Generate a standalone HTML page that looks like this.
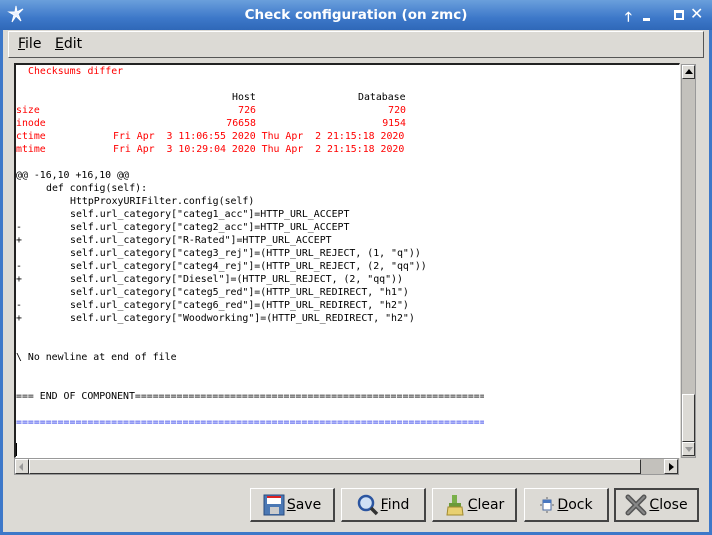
<!DOCTYPE html>
<html><head><meta charset="utf-8"><style>
*{margin:0;padding:0;box-sizing:border-box}
body{width:712px;height:535px;overflow:hidden;background:#dcdad5;font-family:"DejaVu Sans","Liberation Sans",sans-serif;position:relative}
.a{position:absolute}
#title{left:0;top:0;width:712px;height:30px;background:linear-gradient(#6a9fdc,#3d78c9 60%,#2f68b8);color:#fff;font-weight:bold;font-size:13.5px;text-align:center;line-height:31px}
#fl{left:0;top:30px;width:3px;height:505px;background:#3d78c9}
#fr{right:0;top:30px;width:3px;height:505px;background:#3d78c9}
#fb{left:0;top:532px;width:712px;height:3px;background:#3d78c9}
#menu{left:8px;top:31px;width:696px;height:27px;border:1px solid #fff;border-right-color:#555;border-bottom-color:#555;background:#dcdad5;font-size:14px;line-height:25px}
#text{left:14px;top:63px;width:666px;height:395px;background:#fff;border:1px solid #777;border-right-color:#fff;border-bottom-color:#fff;border-top:2px solid #222;border-left:2px solid #222}
.t{position:absolute;font-family:"DejaVu Sans Mono","Liberation Mono",monospace;font-size:9.9px;line-height:13px;white-space:pre;color:#000}
.r{color:#f00}
.b{color:#1c2ce8}
.btn{position:absolute;top:488px;height:34px;border:1px solid #fff;border-right:2px solid #444;border-bottom:2px solid #444;background:#dcdad5;font-size:14px;line-height:30px;display:flex;align-items:center;justify-content:center;gap:2px}
u{text-decoration:underline}
</style></head><body>
<div class="a" id="title">Check configuration (on zmc)</div>
<svg class="a" style="left:6px;top:4px" width="20" height="20" viewBox="0 0 20 20"><path d="M10 2 L11 8 L17 5 L12 10 L15 17 L10 12 L6 18 L8 11 L3 8 L9 8Z" fill="#e8f0ff" stroke="#fff" stroke-width="1"/></svg>
<div class="a" style="left:625px;top:8px;color:#fff;font-size:13px;font-weight:bold">🡑</div>
<div class="a" style="left:641px;top:10px;width:14px;height:12px;color:#fff;font-size:12px"><div style="position:absolute;left:2px;top:8px;width:7px;height:3px;background:#fff"></div></div>
<div class="a" style="left:674px;top:10px;width:10px;height:10px;border:2px solid #fff;border-top-width:3px"></div>
<div class="a" style="left:690px;top:4px;color:#fff;font-size:16px;font-weight:bold">✕</div>
<div class="a" id="fl"></div><div class="a" id="fr"></div><div class="a" id="fb"></div>
<div class="a" id="menu"><span style="position:absolute;left:9px"><u>F</u>ile</span><span style="position:absolute;left:46px"><u>E</u>dit</span></div>
<div class="a" id="text"></div>
<div class="t r" style="left:28px;top:65px">Checksums differ</div>
<div class="t" style="left:232px;top:91px">Host</div>
<div class="t" style="left:358px;top:91px">Database</div>
<div class="t r" style="left:226px;top:104px;width:30px;text-align:right">726</div><div class="t r" style="left:16px;top:104px">size</div><div class="t r" style="left:370px;top:104px;width:36px;text-align:right">720</div>
<div class="t r" style="left:16px;top:117px">inode</div><div class="t r" style="left:200px;top:117px;width:56px;text-align:right">76658</div><div class="t r" style="left:360px;top:117px;width:46px;text-align:right">9154</div>
<div class="t r" style="left:16px;top:130px">ctime</div><div class="t r" style="left:113px;top:130px">Fri Apr  3 11:06:55 2020 Thu Apr  2 21:15:18 2020</div>
<div class="t r" style="left:16px;top:143px">mtime</div><div class="t r" style="left:113px;top:143px">Fri Apr  3 10:29:04 2020 Thu Apr  2 21:15:18 2020</div>
<div class="t" style="left:16px;top:169px">@@ -16,10 +16,10 @@</div>
<div class="t" style="left:46px;top:182px">def config(self):</div>
<div class="t" style="left:70px;top:195px">HttpProxyURIFilter.config(self)</div>
<div class="t" style="left:70px;top:208px">self.url_category["categ1_acc"]=HTTP_URL_ACCEPT</div>
<div class="t" style="left:16px;top:221px">-</div><div class="t" style="left:70px;top:221px">self.url_category["categ2_acc"]=HTTP_URL_ACCEPT</div>
<div class="t" style="left:16px;top:234px">+</div><div class="t" style="left:70px;top:234px">self.url_category["R-Rated"]=HTTP_URL_ACCEPT</div>
<div class="t" style="left:70px;top:247px">self.url_category["categ3_rej"]=(HTTP_URL_REJECT, (1, "q"))</div>
<div class="t" style="left:16px;top:260px">-</div><div class="t" style="left:70px;top:260px">self.url_category["categ4_rej"]=(HTTP_URL_REJECT, (2, "qq"))</div>
<div class="t" style="left:16px;top:273px">+</div><div class="t" style="left:70px;top:273px">self.url_category["Diesel"]=(HTTP_URL_REJECT, (2, "qq"))</div>
<div class="t" style="left:70px;top:286px">self.url_category["categ5_red"]=(HTTP_URL_REDIRECT, "h1")</div>
<div class="t" style="left:16px;top:299px">-</div><div class="t" style="left:70px;top:299px">self.url_category["categ6_red"]=(HTTP_URL_REDIRECT, "h2")</div>
<div class="t" style="left:16px;top:312px">+</div><div class="t" style="left:70px;top:312px">self.url_category["Woodworking"]=(HTTP_URL_REDIRECT, "h2")</div>
<div class="t" style="left:16px;top:351px">\ No newline at end of file</div>
<div class="t" style="left:16px;top:390px;width:468px;overflow:hidden">=== END OF COMPONENT==========================================================================</div>
<div class="t b" style="left:16px;top:416px;width:468px;overflow:hidden">==============================================================================================================</div>
<div class="a" style="left:16px;top:443px;width:1px;height:13px;background:#000"></div>
<div class="a" style="left:681px;top:64px;width:15px;height:394px;background:#c3c1bc;border:1px solid #999"></div>
<div class="a" style="left:682px;top:65px;width:13px;height:14px;background:#dcdad5;border:1px solid #fff;border-right-color:#333;border-bottom-color:#333"></div>
<div class="a" style="left:685px;top:69px;width:0;height:0;border-left:4px solid transparent;border-right:4px solid transparent;border-bottom:5px solid #000"></div>
<div class="a" style="left:682px;top:394px;width:13px;height:48px;background:#dcdad5;border:1px solid #fff;border-right-color:#333;border-bottom-color:#333"></div>
<div class="a" style="left:682px;top:442px;width:13px;height:14px;background:#dcdad5;border:1px solid #fff;border-right-color:#333;border-bottom-color:#333"></div>
<div class="a" style="left:685px;top:447px;width:0;height:0;border-left:4px solid transparent;border-right:4px solid transparent;border-top:5px solid #999"></div>
<div class="a" style="left:14px;top:458px;width:665px;height:17px;background:#c3c1bc;border:1px solid #999"></div>
<div class="a" style="left:15px;top:459px;width:14px;height:15px;background:#dcdad5;border:1px solid #fff;border-right-color:#333;border-bottom-color:#333"></div>
<div class="a" style="left:19px;top:463px;width:0;height:0;border-top:4px solid transparent;border-bottom:4px solid transparent;border-right:4px solid #999"></div>
<div class="a" style="left:29px;top:459px;width:612px;height:15px;background:#dcdad5;border:1px solid #fff;border-right-color:#333;border-bottom-color:#333"></div>
<div class="a" style="left:664px;top:459px;width:14px;height:15px;background:#dcdad5;border:1px solid #fff;border-right-color:#333;border-bottom-color:#333"></div>
<div class="a" style="left:669px;top:463px;width:0;height:0;border-top:4px solid transparent;border-bottom:4px solid transparent;border-left:5px solid #000"></div>
<div class="btn" style="left:250px;width:85px"><svg width="22" height="22" viewBox="0 0 22 22"><rect x="1" y="1" width="20" height="20" fill="#4b78b4" stroke="#2a4c80"/><rect x="4" y="2" width="14" height="8" fill="#fff"/><rect x="4" y="2" width="14" height="2" fill="#d22"/><rect x="7" y="13" width="9" height="7" fill="#ccc"/></svg><span><u>S</u>ave</span></div>
<div class="btn" style="left:341px;width:85px"><svg width="22" height="22" viewBox="0 0 22 22"><circle cx="9" cy="9" r="7" fill="#cfe0f5" stroke="#2b55a0" stroke-width="2.5"/><path d="M14 14 L20 20" stroke="#333" stroke-width="3.5"/></svg><span><u>F</u>ind</span></div>
<div class="btn" style="left:432px;width:85px"><svg width="22" height="22" viewBox="0 0 22 22"><rect x="8" y="1" width="5" height="9" fill="#7ab04a"/><rect x="5" y="9" width="12" height="4" fill="#6a9a3a"/><path d="M4 13 H18 L19 21 H3Z" fill="#e8d070" stroke="#a08a30"/></svg><span><u>C</u>lear</span></div>
<div class="btn" style="left:524px;width:85px"><svg width="16" height="18" viewBox="0 0 16 18"><rect x="4" y="4" width="8" height="10" fill="#fff" stroke="#4a6aa0"/><rect x="4" y="4" width="8" height="3" fill="#4a78c0"/><path d="M1 9h2M13 9h2M8 1v2M8 15v2" stroke="#666"/></svg><span><u>D</u>ock</span></div>
<div class="btn" style="left:614px;width:85px;border-left-color:#444;border-top-color:#444;border-width:2px"><svg width="22" height="22" viewBox="0 0 22 22"><path d="M3 3 L19 19 M19 3 L3 19" stroke="#555" stroke-width="5" stroke-linecap="round"/><path d="M3 3 L19 19 M19 3 L3 19" stroke="#888" stroke-width="2" stroke-linecap="round"/></svg><span><u>C</u>lose</span></div>
</body></html>
